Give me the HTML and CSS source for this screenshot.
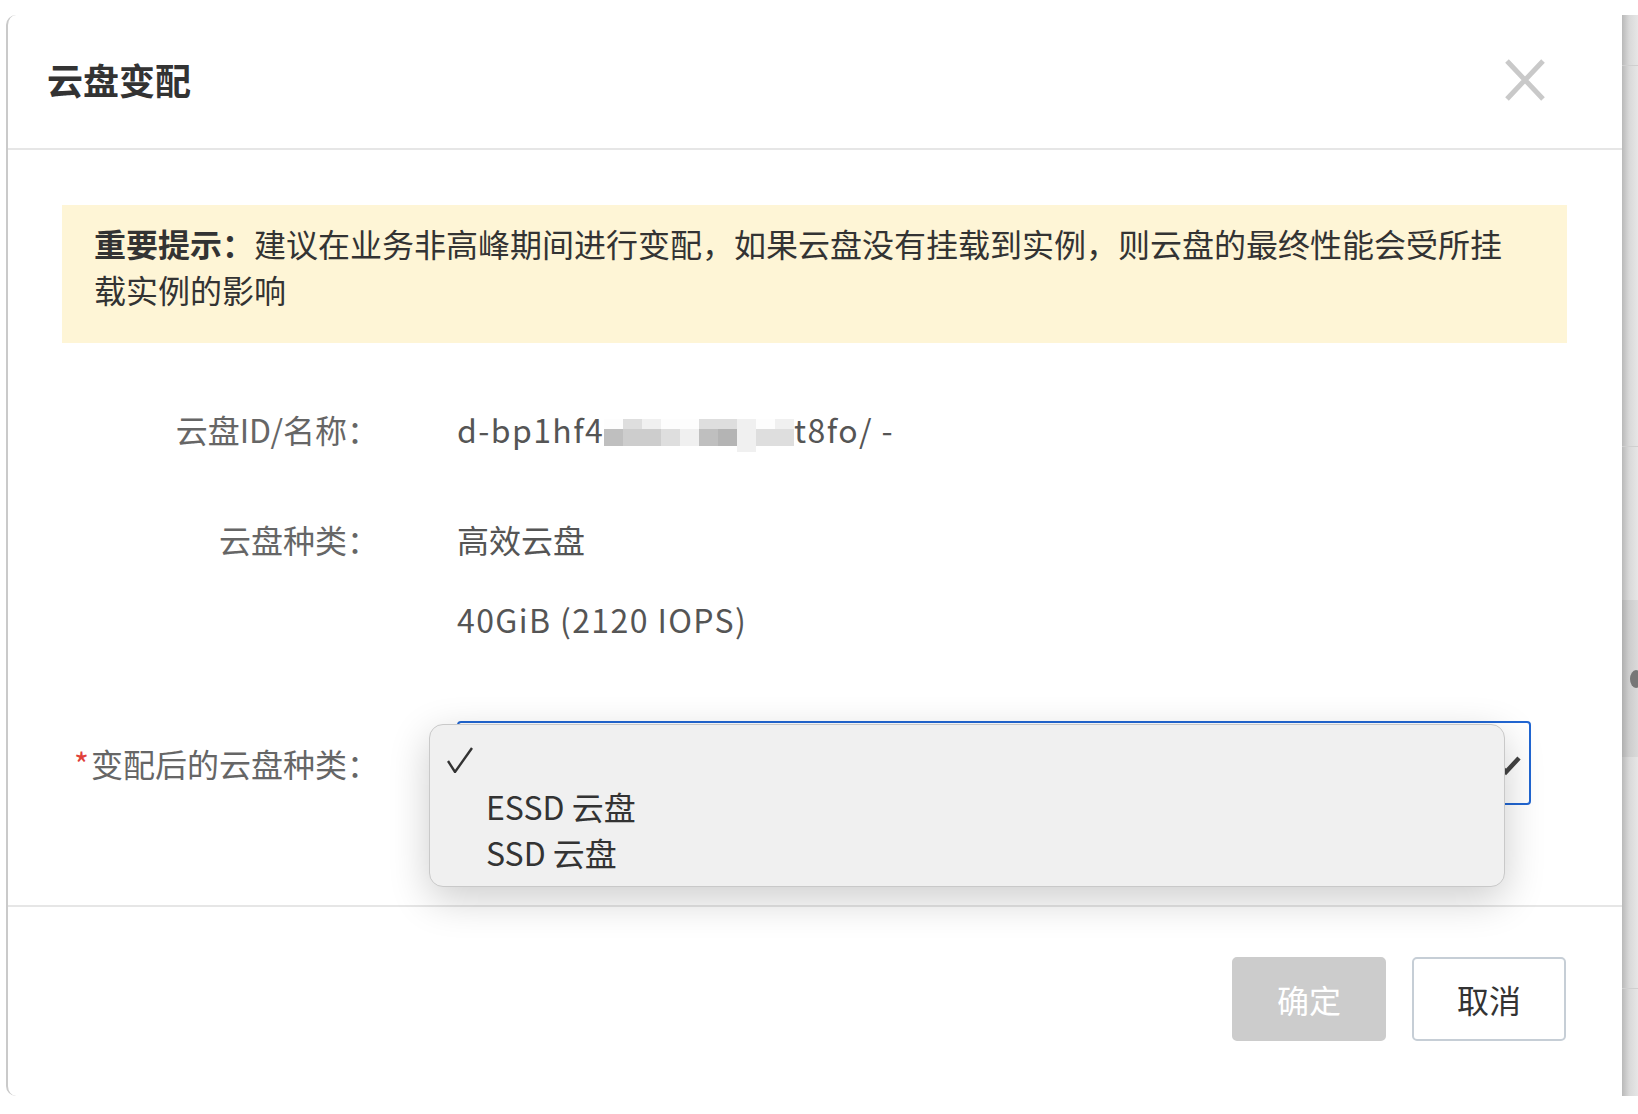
FILE: index.html
```html
<!DOCTYPE html>
<html lang="zh-CN">

<head>
  <meta charset="UTF-8">
  <meta name="viewport" content="width=device-width, initial-scale=1.0">
  <title>云盘变配</title>

  <link rel="stylesheet" href="styles.css">
</head>

<body>
  <div class="page">
    <div class="modal">
      <div class="modal-header">
        <h1 class="modal-title">云盘变配</h1>
        <span class="modal-close">
          <svg width="42" height="42" viewBox="0 0 42 42">
            <path d="M3 2 L39 40 M39 2 L3 40" stroke="#c9c9c9" stroke-width="5" fill="none" />
          </svg>
        </span>
      </div>

      <div class="modal-body">
        <div class="notice">
          <strong>重要提示：</strong>建议在业务非高峰期间进行变配，如果云盘没有挂载到实例，则云盘的最终性能会受所挂载实例的影响
        </div>

        <div class="form">
          <div class="form-row row-id">
            <div class="form-label">云盘ID/名称：</div>
            <div class="form-value latin">d-bp1hf4<span class="mosaic">
                <span class="m0"></span><span class="m2"></span><span class="m1"></span><span class="m0"></span><span class="m0"></span><span class="m2"></span><span class="m2"></span><span class="m1"></span><span class="m0"></span><span class="m1"></span>
                <span class="m4"></span><span class="m3"></span><span class="m3"></span><span class="m2"></span><span class="m1"></span><span class="m4"></span><span class="m5"></span><span class="m1"></span><span class="m2"></span><span class="m2"></span>
                <span class="m1 tail"></span>
              </span>t8fo/ -</div>
          </div>

          <div class="form-row row-type">
            <div class="form-label">云盘种类：</div>
            <div class="form-value">
              <div>高效云盘</div>
              <div class="value-sub latin">40GiB (2120 IOPS)</div>
            </div>
          </div>

          <div class="form-row row-select">
            <div class="form-label"><span class="required">*</span>变配后的云盘种类：</div>
            <div class="form-control">
              <div class="select">
                <svg class="select-arrow" width="32" height="22" viewBox="0 0 32 22">
                  <polyline points="4,4 17,18 30,4" stroke="#444" stroke-width="4.5" fill="none" />
                </svg>
              </div>
              <ul class="select-menu">
                <li class="checked">
                  <svg width="26" height="26" viewBox="0 0 26 26">
                    <polyline points="1,14 8,25 25,1" stroke="#333" stroke-width="2.4" fill="none" />
                  </svg>
                </li>
                <li>ESSD 云盘</li>
                <li>SSD 云盘</li>
              </ul>
            </div>
          </div>
        </div>
      </div>

      <div class="modal-footer">
        <button class="btn btn-primary" disabled>确定</button>
        <button class="btn">取消</button>
      </div>
    </div>

    <div class="edge">
      <div class="edge-top"></div>
      <div class="edge-mid"></div>
      <div class="edge-gap"></div>
      <div class="edge-band"><span class="edge-dot"></span></div>
      <div class="edge-low"></div>
    </div>
  </div>
</body>

</html>
```

FILE: styles.css
```css
* {
  padding: 0;
  margin: 0;
  box-sizing: border-box;
}

body {
  background-color: #fff;
  font-family: "Noto Sans CJK SC", "Noto Sans", sans-serif;
  font-size: 32px;
  color: #333;
}

.page {
  display: flex;
  padding: 15px 0 0 6px;
  height: 1114px;
  overflow: hidden;
}

.modal {
  width: 1616px;
  height: 1081px;
  display: flex;
  flex-direction: column;
  background-color: #fff;
  border-left: 2px solid #cacaca;
  border-radius: 10px;
  position: relative;
  z-index: 1;
}

.modal-header {
  height: 135px;
  display: flex;
  align-items: center;
  justify-content: space-between;
  padding: 0 76px 4px 39px;
  border-bottom: 2px solid #e6e6e6;
}

.modal-title {
  font-size: 36px;
  font-weight: 700;
  line-height: 48px;
  color: #333;
  margin-bottom: 2px;
}

.modal-close {
  display: flex;
  width: 42px;
  height: 42px;
}

.modal-body {
  padding: 55px 55px 100px 54px;
}

.notice {
  height: 138px;
  padding: 15px 48px 31px 32px;
  background-color: #fef5d6;
  line-height: 46px;
  color: #333;
}

.notice strong {
  font-weight: 700;
}

.form-row {
  display: grid;
  grid-template-columns: 317px 1fr;
  column-gap: 78px;
  line-height: 46px;
}

.row-id {
  margin-top: 63px;
}

.row-type {
  margin-top: 64px;
}

.row-select {
  margin-top: 79px;
  align-items: center;
}

.form-label {
  text-align: right;
  color: #666;
  white-space: nowrap;
}

.required {
  color: #e0403a;
  margin-right: 2px;
}

.form-value {
  color: #555;
}

.latin {
  letter-spacing: 1.4px;
}

.value-sub {
  margin-top: 34px;
}

.mosaic {
  display: inline-grid;
  grid-template-columns: repeat(10, 19px);
  grid-template-rows: 10px 17px 6px;
  vertical-align: top;
  margin-top: 13px;
  height: 33px;
}

.mosaic .m0 { background-color: #fdfdfd; }
.mosaic .m1 { background-color: #f0f0f0; }
.mosaic .m2 { background-color: #dedede; }
.mosaic .m3 { background-color: #cdcdcd; }
.mosaic .m4 { background-color: #bfbfbf; }
.mosaic .m5 { background-color: #b4b4b4; }

.mosaic .tail {
  grid-column: 8;
}

.form-control {
  position: relative;
}

.select {
  width: 1074px;
  height: 84px;
  border: 2px solid #2166d2;
  border-radius: 4px;
  background-color: #fff;
  position: relative;
}

.select-arrow {
  position: absolute;
  right: 8px;
  top: 31px;
}

.select-menu {
  position: absolute;
  left: -28px;
  top: 3px;
  width: 1076px;
  height: 163px;
  padding-top: 12px;
  list-style: none;
  background-color: #f0f0f0;
  border: 1px solid #c9c9c9;
  border-radius: 14px;
  box-shadow: 0 12px 40px rgba(0, 0, 0, 0.2);
  z-index: 2;
  color: #333;
}

.select-menu li {
  height: 46px;
  line-height: 46px;
  padding-left: 56px;
}

.select-menu li.checked {
  display: flex;
  align-items: center;
  padding-left: 17px;
}

.modal-footer {
  display: flex;
  justify-content: flex-end;
  gap: 26px;
  padding: 50px 56px 55px 0;
  border-top: 2px solid #e6e6e6;
}

.btn {
  width: 154px;
  height: 84px;
  font-family: inherit;
  font-size: 32px;
  color: #333;
  background-color: #fff;
  border: 2px solid #c6ced6;
  border-radius: 5px;
}

.btn-primary {
  background-color: #cccccc;
  border-color: #cccccc;
  color: #fff;
}

.edge {
  flex: 1;
  height: 1081px;
  background: linear-gradient(to right, #b9b9b9, #d9d9d9 45%, #e6e6e6);
}

.edge-top {
  height: 51px;
  border-bottom: 1px solid #cfcfcf;
}

.edge-mid {
  height: 381px;
  border-bottom: 1px solid #cfcfcf;
}

.edge-gap {
  height: 153px;
}

.edge-band {
  height: 157px;
  display: flex;
  align-items: center;
  justify-content: flex-end;
  background-color: rgba(0, 0, 0, 0.05);
}

.edge-dot {
  width: 12px;
  height: 18px;
  margin-right: -4px;
  border-radius: 50%;
  background-color: #777;
}

.edge-low {
  height: 232px;
  border-bottom: 1px solid #cfcfcf;
}
```
